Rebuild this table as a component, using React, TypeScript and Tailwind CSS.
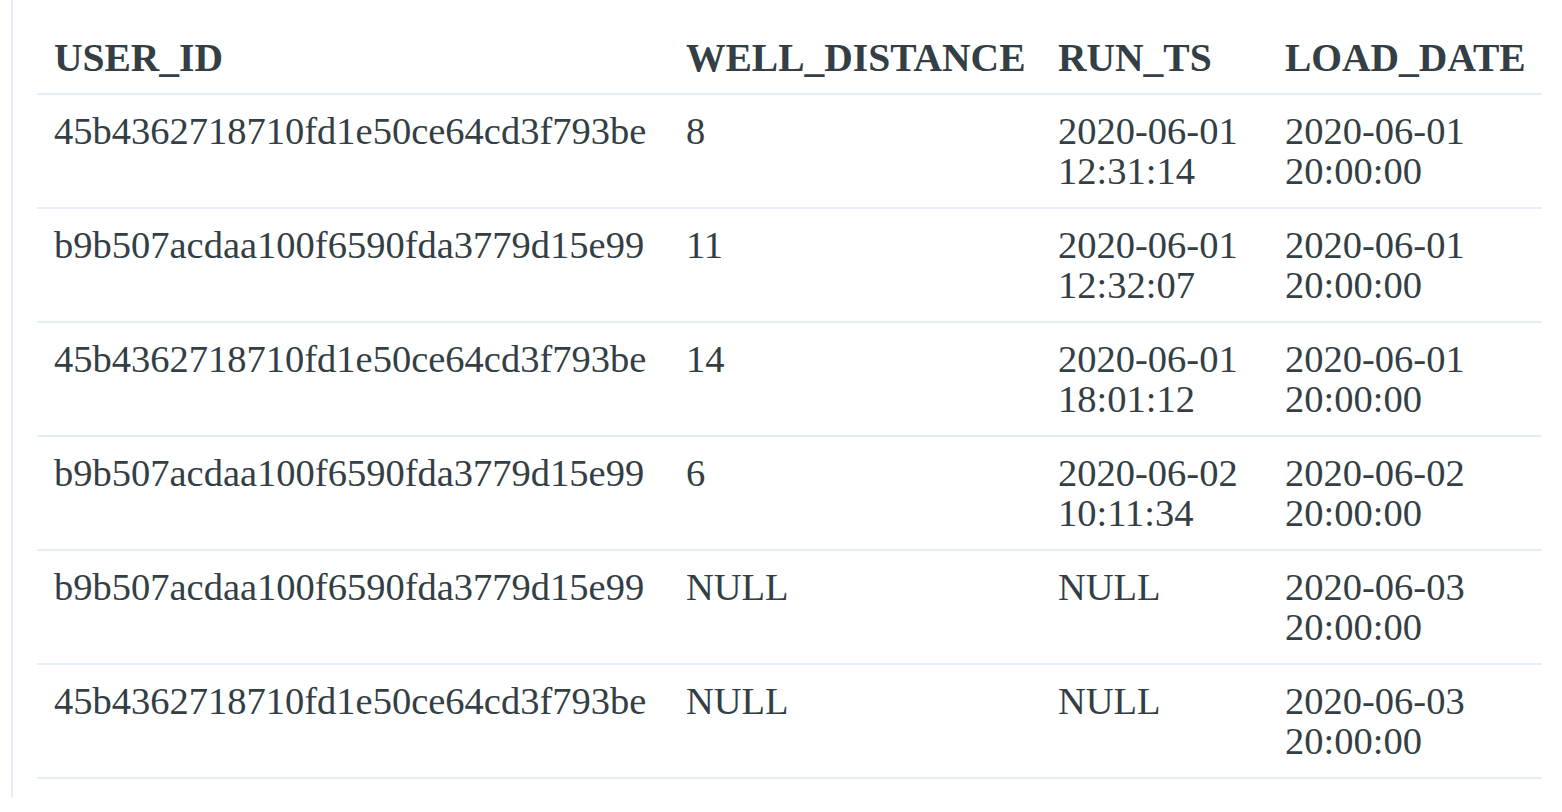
import React from "react";

const rows = [
  ["45b4362718710fd1e50ce64cd3f793be", "8", "2020-06-01 12:31:14", "2020-06-01 20:00:00"],
  ["b9b507acdaa100f6590fda3779d15e99", "11", "2020-06-01 12:32:07", "2020-06-01 20:00:00"],
  ["45b4362718710fd1e50ce64cd3f793be", "14", "2020-06-01 18:01:12", "2020-06-01 20:00:00"],
  ["b9b507acdaa100f6590fda3779d15e99", "6", "2020-06-02 10:11:34", "2020-06-02 20:00:00"],
  ["b9b507acdaa100f6590fda3779d15e99", "NULL", "NULL", "2020-06-03 20:00:00"],
  ["45b4362718710fd1e50ce64cd3f793be", "NULL", "NULL", "2020-06-03 20:00:00"],
];

export default function App() {
  return (
    <div className="w-[1562px] h-[812px] bg-white overflow-hidden">
      <div className="ml-[11px] mr-[20px] border-l-2 border-[#e5eef7] pl-[24px] pt-[24px] pb-[18px]">
        <table className="w-[1505px] table-fixed border-collapse text-[#333e45] font-[family-name:Liberation_Serif,Times_New_Roman,serif] text-[38.5px] leading-[40px]">
          <colgroup>
            <col className="w-[632px]" />
            <col className="w-[372px]" />
            <col className="w-[227px]" />
            <col className="w-[274px]" />
          </colgroup>
          <thead>
            <tr className="border-b-2 border-[#e5eef7]">
              {["USER_ID", "WELL_DISTANCE", "RUN_TS", "LOAD_DATE"].map((h) => (
                <th key={h} className="text-left font-bold text-[39.5px] px-[17px] pt-[14px] pb-[15px] whitespace-nowrap">
                  {h}
                </th>
              ))}
            </tr>
          </thead>
          <tbody>
            {rows.map((r, i) => (
              <tr key={i} className="border-b-2 border-[#e5eef7]">
                {r.map((c, j) => (
                  <td key={j} className="align-top font-normal px-[17px] pt-[16px] pb-[16px]">
                    <div className="h-[80px]">{c}</div>
                  </td>
                ))}
              </tr>
            ))}
          </tbody>
        </table>
      </div>
    </div>
  );
}
